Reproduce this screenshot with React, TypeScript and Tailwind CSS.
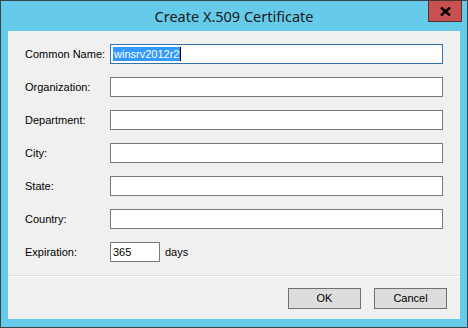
import React from "react";

const fields = ["Common Name:", "Organization:", "Department:", "City:", "State:", "Country:"];

export default function App() {
  return (
    <div className="w-[468px] h-[328px] bg-[#65cbe9] border border-[#3a4550] flex flex-col [font-family:'Liberation_Sans',Arial,sans-serif]">
      <div className="relative h-[30px] flex items-center justify-center shrink-0">
        <span className="text-[14.5px] text-[#1a1a1a] [font-family:'Noto_Sans',sans-serif] mt-[1px]">
          Create X.509 Certificate
        </span>
        <div className="absolute right-[5px] -top-[1px] w-[34px] h-[22px] bg-[#c75050] border border-[#4d3232] flex items-center justify-center">
          <svg width="11" height="9" viewBox="0 0 11 9">
            <path d="M1 0.5 L10 8.5 M10 0.5 L1 8.5" stroke="#000" strokeWidth="2.4" />
          </svg>
        </div>
      </div>
      <div className="mx-[7px] h-[288px] bg-[#f0f0f0] flex flex-col shrink-0">
        <div className="flex flex-col gap-[13px] pt-[13px] pl-[17px] pr-[17px]">
          {fields.map((f, i) => (
            <div key={f} className="flex items-center h-[20px]">
              <span className="w-[85px] text-[11px] text-black">{f}</span>
              <div
                className={
                  "flex-1 h-[20px] bg-white border flex items-center pl-[2px] " +
                  (i === 0 ? "border-[#3372a8]" : "border-[#7a7a7a]")
                }
              >
                {i === 0 && (
                  <>
                    <span className="bg-[#3399ff] text-white text-[11px] leading-[14px] px-[1px]">winsrv2012r2</span>
                    <span className="w-[1px] h-[14px] bg-black" />
                  </>
                )}
              </div>
            </div>
          ))}
          <div className="flex items-center h-[20px]">
            <span className="w-[85px] text-[11px] text-black">Expiration:</span>
            <div className="w-[50px] h-[20px] bg-white border border-[#7a7a7a] flex items-center pl-[2px] text-[11px]">
              365
            </div>
            <span className="ml-[5px] text-[11px] text-black">days</span>
          </div>
        </div>
        <div className="mt-[13px] h-[1px] bg-[#dfdfdf]" />
        <div className="h-[1px] bg-white" />
        <div className="flex justify-end gap-[13px] pt-[11px] pr-[13px]">
          <button className="w-[73px] h-[21px] bg-[#dddddd] border border-[#707070] text-[11px] text-black">OK</button>
          <button className="w-[73px] h-[21px] bg-[#dddddd] border border-[#707070] text-[11px] text-black">Cancel</button>
        </div>
      </div>
    </div>
  );
}
